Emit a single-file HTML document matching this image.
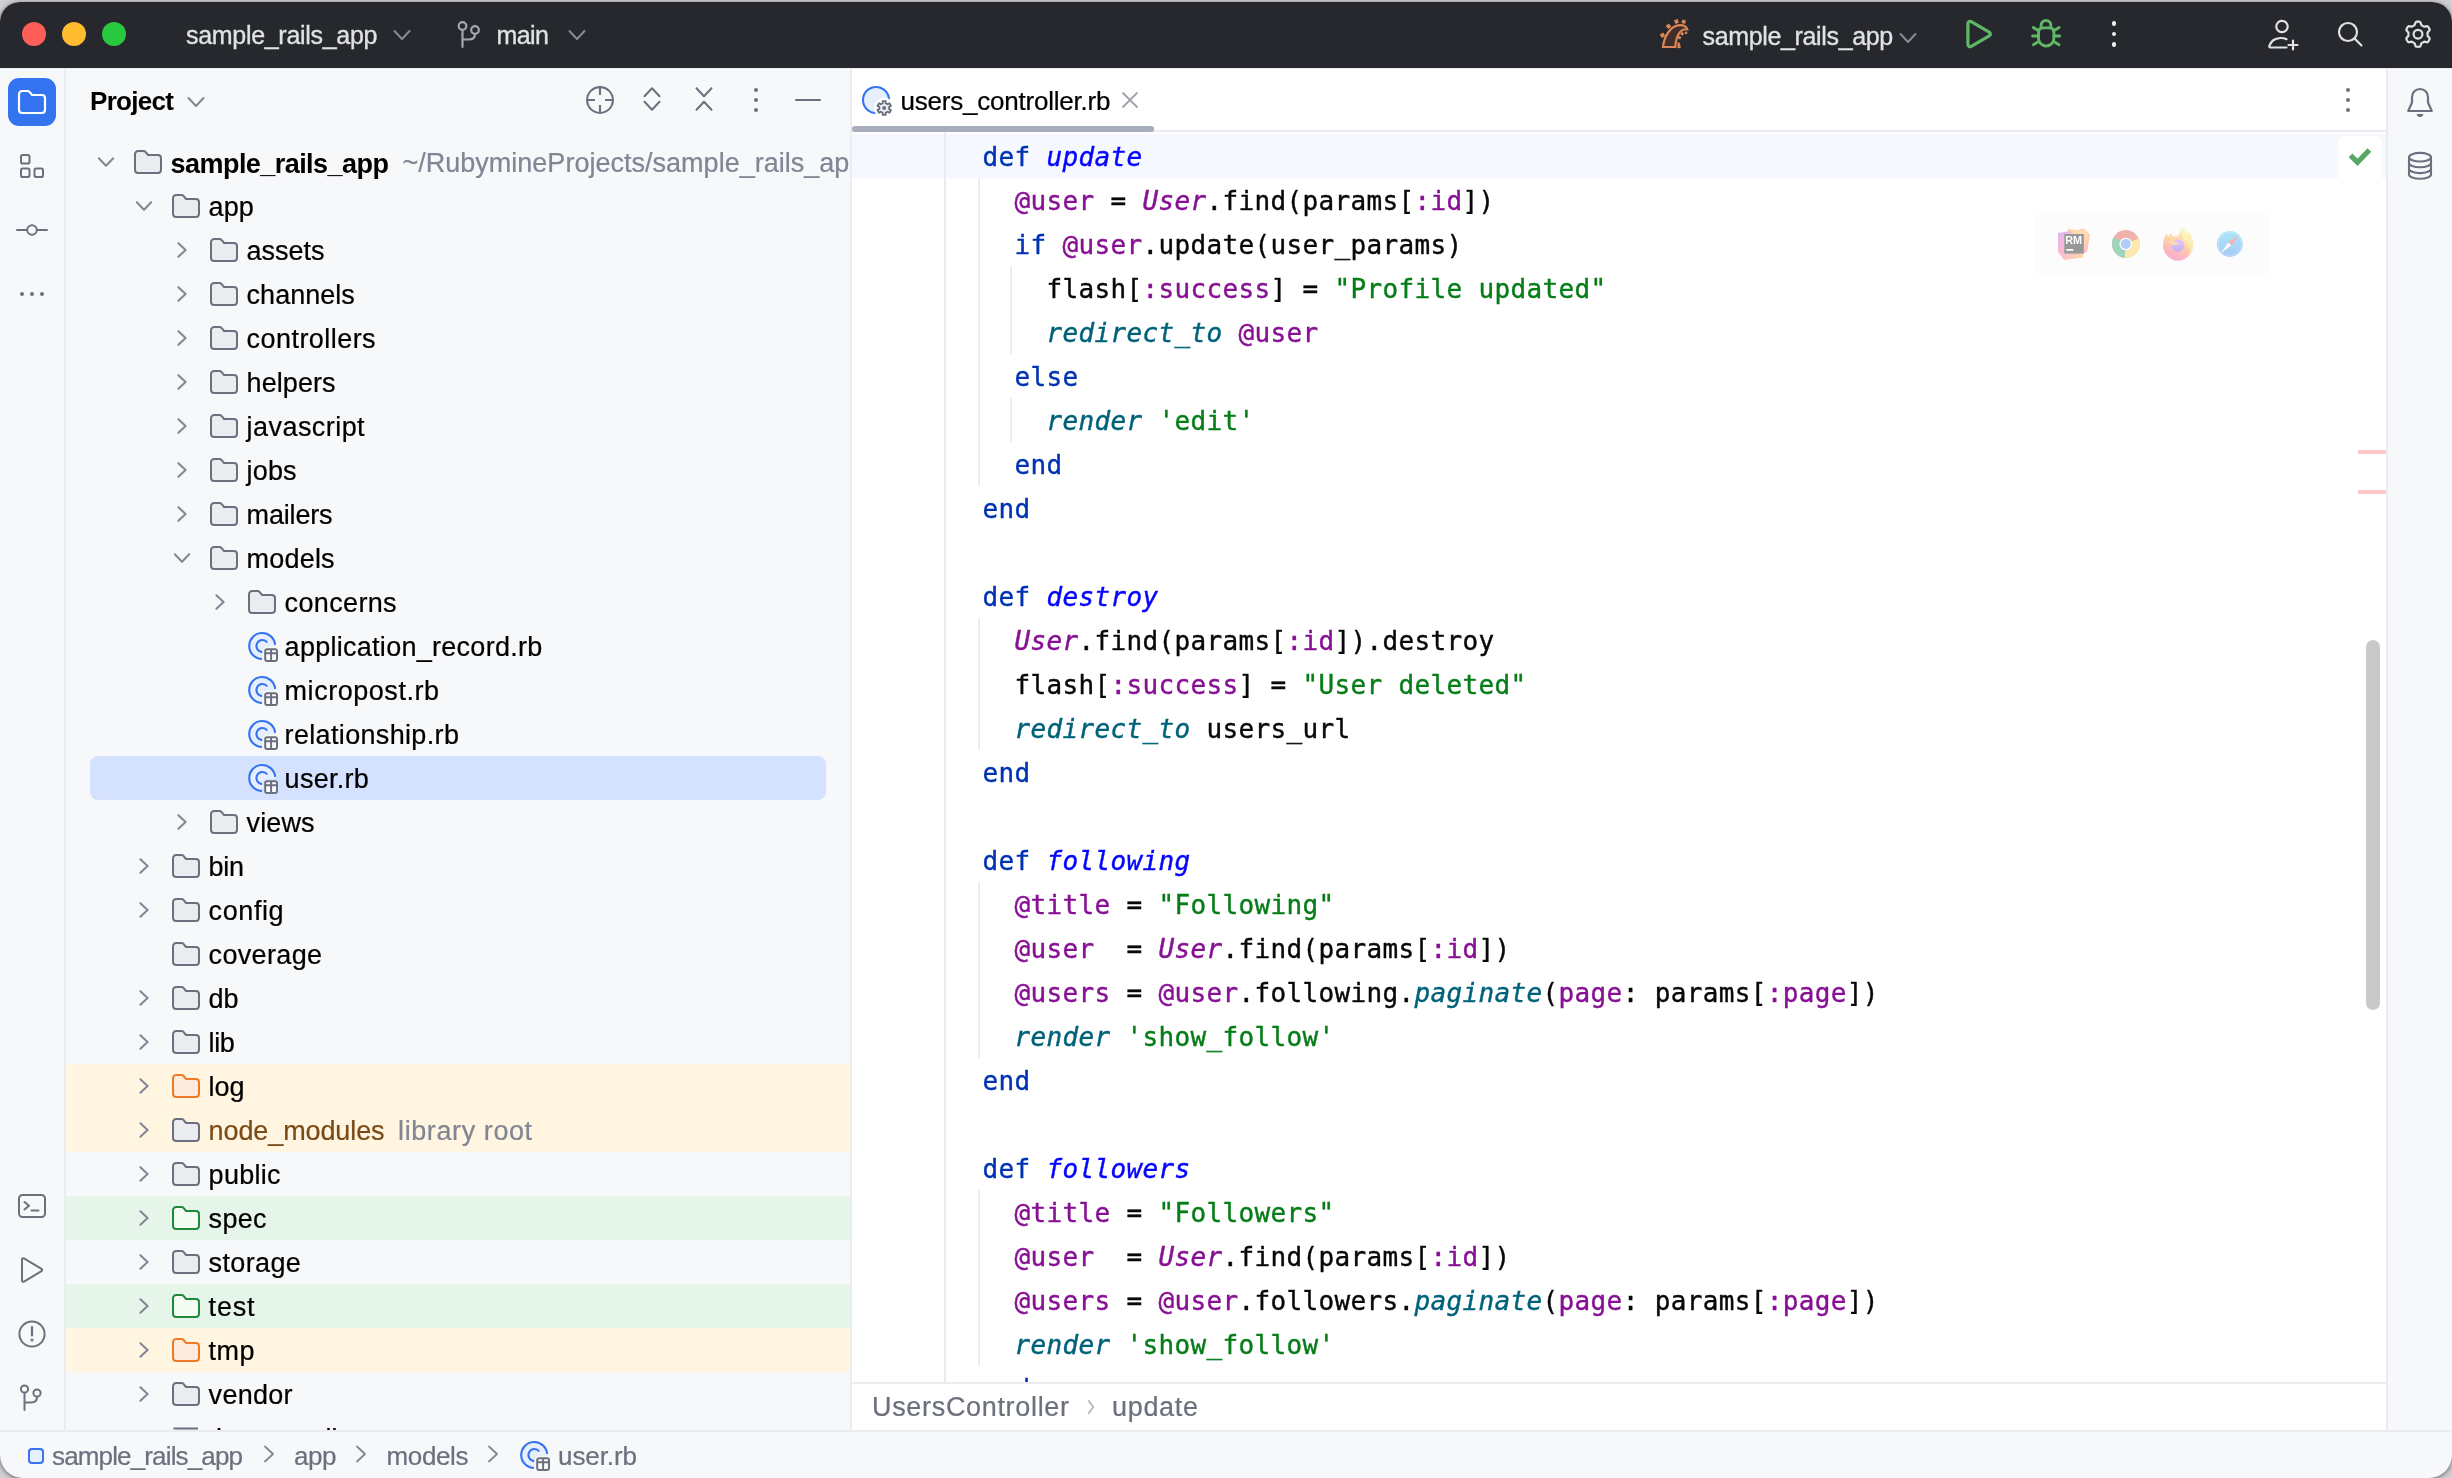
<!DOCTYPE html><html lang="en"><head><meta charset="utf-8"><title>sample_rails_app – users_controller.rb</title>
<style>

html,body{margin:0;padding:0;}
body{width:2452px;height:1478px;overflow:hidden;background:#D2CFD2;position:relative;font-family:"Liberation Sans", "DejaVu Sans", sans-serif;}
.a{position:absolute;display:block;}
.t{position:absolute;white-space:pre;font-family:"Liberation Sans", "DejaVu Sans", sans-serif;}
#win{will-change:transform;position:absolute;left:0;top:2px;width:2452px;height:1476px;border-radius:20px 20px 23px 23px;overflow:hidden;background:#F7F8FA;box-shadow:0 1px 5px rgba(0,0,0,.55);}
#title{position:absolute;left:0;top:0;width:2452px;height:65.5px;background:#27282E;}
.code{position:absolute;left:951px;white-space:pre;font-family:"DejaVu Sans Mono", "Liberation Mono", monospace;font-size:26px;letter-spacing:0.348px;line-height:44px;height:44px;color:#080808;-webkit-text-stroke:0.4px currentColor;}
.k{color:#0033B3} .m{color:#0505FF;font-style:italic} .v{color:#871094} .c{color:#871094;font-style:italic}
.s{color:#067D17} .f{color:#00627A;font-style:italic}
.row{position:absolute;left:67px;width:783px;height:44px;}

</style></head><body>
<div id="win">
<div id="title"></div>
<div class="a" style="left:22px;top:20px;width:24px;height:24px;border-radius:12px;background:#FF5F57"></div>
<div class="a" style="left:62px;top:20px;width:24px;height:24px;border-radius:12px;background:#FEBC2E"></div>
<div class="a" style="left:102px;top:20px;width:24px;height:24px;border-radius:12px;background:#28C840"></div>
<div class="t" style="left:186px;top:13.0px;font-size:25px;line-height:40px;color:#DFE1E5;letter-spacing:-0.304px;-webkit-text-stroke:0.35px #DFE1E5;">sample_rails_app</div>
<svg class="a" style="left:390px;top:20.5px" width="24" height="24" viewBox="0 0 24 24"><path d="M4.5 8.0L12 16.0L19.5 8.0" fill="none" stroke="#868A98" stroke-width="2" stroke-linecap="round" stroke-linejoin="round"/></svg>
<svg class="a" style="left:456px;top:17px" width="28" height="32" viewBox="0 0 28 32"><circle cx="6.5" cy="7" r="3.800" fill="none" stroke="#A4A7B0" stroke-width="2.2"/><circle cx="19" cy="11" r="3.800" fill="none" stroke="#A4A7B0" stroke-width="2.2"/><path d="M6.5 11V28M19 15c0 4-3 5.500-6 5.500H6.500" fill="none" stroke="#A4A7B0" stroke-width="2.2" stroke-linecap="round"/></svg>
<div class="t" style="left:496.5px;top:13.0px;font-size:25px;line-height:40px;color:#DFE1E5;letter-spacing:-0.562px;-webkit-text-stroke:0.35px #DFE1E5;">main</div>
<svg class="a" style="left:564.5px;top:20.5px" width="24" height="24" viewBox="0 0 24 24"><path d="M4.5 8.0L12 16.0L19.5 8.0" fill="none" stroke="#868A98" stroke-width="2" stroke-linecap="round" stroke-linejoin="round"/></svg>
<svg class="a" style="left:1656px;top:15px" width="36" height="34" viewBox="0 0 36 34"><path d="M7 30C8 19 15 8.200 24.200 8.200C28 8.200 30.500 9.800 31.200 12.300C26.500 11.800 22.800 15 21 20.500C19.800 24 19.300 27 19.300 30Z" fill="#432E27" stroke="#DB8656" stroke-width="2.200" stroke-linejoin="miter"/><g fill="#DB8656"><rect x="4.50" y="16.20" width="4" height="4" transform="rotate(-28 6.5 18.2)"/><rect x="10.50" y="7.30" width="4" height="4" transform="rotate(-40 12.5 9.3)"/><rect x="18.60" y="2.60" width="3.8" height="3.8" transform="rotate(-18 20.5 4.5)"/><rect x="25.90" y="2.90" width="3.6" height="3.6" transform="rotate(15 27.7 4.7)"/><rect x="28.80" y="14.60" width="2.4" height="2.4" transform="rotate(0 30 15.8)"/><rect x="24.80" y="15.40" width="2.8" height="2.8" transform="rotate(40 26.2 16.8)"/><rect x="22.05" y="19.15" width="2.9" height="2.9" transform="rotate(25 23.5 20.6)"/><path d="M21.600 24.800l2.300 1.200.9 5-3.400.3z"/></g></svg>
<div class="t" style="left:1702.5px;top:13.5px;font-size:25px;line-height:40px;color:#DFE1E5;letter-spacing:-0.350px;-webkit-text-stroke:0.35px #DFE1E5;">sample_rails_app</div>
<svg class="a" style="left:1896px;top:24px" width="24" height="24" viewBox="0 0 24 24"><path d="M4.5 8.0L12 16.0L19.5 8.0" fill="none" stroke="#868A98" stroke-width="2" stroke-linecap="round" stroke-linejoin="round"/></svg>
<svg class="a" style="left:1961px;top:14px" width="36" height="36" viewBox="0 0 36 36"><path d="M6.900 7.600v20.800c0 1.700 1.800 2.700 3.300 1.900l18-10.400c1.500-.9 1.500-3 0-3.800l-18-10.400c-1.500-.9-3.300.2-3.300 1.900z" fill="none" stroke="#5FB865" stroke-width="3.200" stroke-linejoin="round"/></svg>
<svg class="a" style="left:2028px;top:15px" width="36" height="34" viewBox="0 0 36 34"><g fill="none" stroke="#5FB865" stroke-width="2.900" stroke-linecap="round"><path d="M10.500 15.500c0-2.800 1.800-4.600 4.600-4.600h6.200c2.800 0 4.600 1.800 4.600 4.600V21.300a7.700 7.700 0 0 1-15.400 0z"/><path d="M13.150 10.900V8.300a4.850 4.850 0 0 1 9.700 0V10.900"/><path d="M4.600 19H10.500M25.900 19H31.600M5.300 10.600L10.700 13.800M31.100 10.600L25.700 13.800M10.700 24.600L5.400 27.800M25.700 24.600L31 27.800"/></g></svg>
<div class="a" style="left:2111.6px;top:18.900000000000002px;width:4.8px;height:4.8px;border-radius:3px;background:#F0F1F5"></div>
<div class="a" style="left:2111.6px;top:29.6px;width:4.8px;height:4.8px;border-radius:3px;background:#F0F1F5"></div>
<div class="a" style="left:2111.6px;top:40.4px;width:4.8px;height:4.8px;border-radius:3px;background:#F0F1F5"></div>
<svg class="a" style="left:2265px;top:15px" width="38" height="36" viewBox="0 0 38 36"><g fill="none" stroke="#DFE1E5" stroke-width="2.200" stroke-linecap="round"><circle cx="17" cy="9.500" r="5.700"/><path d="M21.500 30.500H5.500c-1 0-1.500-.8-1.200-1.700C6 24 10.500 21 16 21c2 0 4 .4 5.500 1.200"/><path d="M28 23.500v9M23.500 28h9"/></g></svg>
<svg class="a" style="left:2334px;top:16px" width="32" height="32" viewBox="0 0 32 32"><g fill="none" stroke="#DFE1E5" stroke-width="2.200" stroke-linecap="round"><circle cx="14" cy="14" r="9"/><path d="M20.800 20.800L27.500 27.500"/></g></svg>
<svg class="a" style="left:2400px;top:14px" width="36" height="36" viewBox="0 0 36 36"><path d="M18.00 5.60L19.10 5.65L20.16 5.94L20.87 7.48L21.33 9.04L22.06 9.50L22.80 9.89L23.51 10.34L24.27 10.73L25.85 10.35L27.54 10.20L28.32 10.97L28.91 11.90L29.42 12.88L29.70 13.94L28.72 15.33L27.60 16.51L27.56 17.36L27.60 18.20L27.56 19.04L27.60 19.89L28.72 21.07L29.70 22.46L29.42 23.52L28.91 24.50L28.32 25.43L27.54 26.20L25.85 26.05L24.27 25.67L23.51 26.06L22.80 26.51L22.06 26.90L21.33 27.36L20.87 28.92L20.16 30.46L19.10 30.75L18.00 30.80L16.90 30.75L15.84 30.46L15.13 28.92L14.67 27.36L13.94 26.90L13.20 26.51L12.49 26.06L11.73 25.67L10.15 26.05L8.46 26.20L7.68 25.43L7.09 24.50L6.58 23.52L6.30 22.46L7.28 21.07L8.40 19.89L8.44 19.04L8.40 18.20L8.44 17.36L8.40 16.51L7.28 15.33L6.30 13.94L6.58 12.88L7.09 11.90L7.68 10.97L8.46 10.20L10.15 10.35L11.73 10.73L12.49 10.34L13.20 9.89L13.94 9.50L14.67 9.04L15.13 7.48L15.84 5.94L16.90 5.65L18.00 5.60Z" fill="none" stroke="#DFE1E5" stroke-width="2.2" stroke-linejoin="round"/><circle cx="18" cy="18.2" r="4.4" fill="none" stroke="#DFE1E5" stroke-width="2.2"/></svg>
<div class="a" style="left:0;top:65.5px;width:2452px;height:1.5px;background:#EBECF0"></div>
<div class="a" style="left:64.3px;top:67px;width:1.9px;height:1361px;background:#EBECF0"></div>
<div class="a" style="left:850px;top:67px;width:2px;height:1361px;background:#EBECF0"></div>
<div class="a" style="left:2386px;top:67px;width:2px;height:1361px;background:#EBECF0"></div>
<div class="a" style="left:0;top:1428px;width:2452px;height:2px;background:#EBECF0"></div>
<div class="a" style="left:8px;top:76px;width:48px;height:48px;border-radius:11px;background:#3574F0"></div>
<svg class="a" style="left:16px;top:84px" width="32" height="32" viewBox="0 0 32 32"><path d="M3 8.200C3 6.400 4.400 5 6.200 5h5.200c.9 0 1.700.4 2.300 1.100L16.100 9h9.700c1.800 0 3.200 1.400 3.200 3.200v11.600c0 1.800-1.400 3.200-3.200 3.200H6.200C4.400 27 3 25.600 3 23.800z" fill="none" stroke="#fff" stroke-width="2.200" stroke-linejoin="round"/></svg>
<svg class="a" style="left:16px;top:148px" width="32" height="32" viewBox="0 0 32 32"><g fill="none" stroke="#6C707E" stroke-width="2"><rect x="5" y="5" width="8.500" height="8.500" rx="1.800"/><rect x="5" y="18.500" width="8.500" height="8.500" rx="1.800"/><rect x="18.500" y="18.500" width="8.500" height="8.500" rx="1.800"/></g></svg>
<svg class="a" style="left:14px;top:212px" width="36" height="32" viewBox="0 0 36 32"><g fill="none" stroke="#6C707E" stroke-width="2" stroke-linecap="round"><circle cx="18" cy="16" r="4.800"/><path d="M3 16h10M23 16h10"/></g></svg>
<div class="a" style="left:19.8px;top:289.8px;width:4.4px;height:4.4px;border-radius:3px;background:#6C707E"></div>
<div class="a" style="left:29.8px;top:289.8px;width:4.4px;height:4.4px;border-radius:3px;background:#6C707E"></div>
<div class="a" style="left:39.8px;top:289.8px;width:4.4px;height:4.4px;border-radius:3px;background:#6C707E"></div>
<svg class="a" style="left:16px;top:1188px" width="32" height="32" viewBox="0 0 32 32"><g fill="none" stroke="#6C707E" stroke-width="2" stroke-linecap="round" stroke-linejoin="round"><rect x="3" y="5" width="26" height="22" rx="3.500"/><path d="M8.500 12l4.500 3.800-4.500 3.700M15.500 20.500h7"/></g></svg>
<svg class="a" style="left:16px;top:1252px" width="32" height="32" viewBox="0 0 32 32"><path d="M6 5.500v21c0 1 1.100 1.600 2 1.100l17.500-10.500c.8-.5.8-1.700 0-2.200L8 4.400C7.100 3.900 6 4.500 6 5.500z" fill="none" stroke="#6C707E" stroke-width="2" stroke-linejoin="round"/></svg>
<svg class="a" style="left:16px;top:1316px" width="32" height="32" viewBox="0 0 32 32"><circle cx="16" cy="16" r="12.600" fill="none" stroke="#6C707E" stroke-width="2"/><path d="M16 9v8.500" stroke="#6C707E" stroke-width="2.200" stroke-linecap="round"/><circle cx="16" cy="22" r="1.500" fill="#6C707E"/></svg>
<svg class="a" style="left:18px;top:1380px" width="28" height="32" viewBox="0 0 28 32"><g fill="none" stroke="#6C707E" stroke-width="2" stroke-linecap="round"><circle cx="6.500" cy="7" r="3.600"/><circle cx="19" cy="11" r="3.600"/><path d="M6.500 11V28M19 15c0 4-3 5.500-6 5.500H6.500"/></g></svg>
<div class="t" style="left:90px;top:79.0px;font-size:26px;line-height:40px;color:#000;font-weight:700;letter-spacing:-0.693px;">Project</div>
<svg class="a" style="left:184px;top:88px" width="24" height="24" viewBox="0 0 24 24"><path d="M4.5 8.0L12 16.0L19.5 8.0" fill="none" stroke="#818594" stroke-width="2" stroke-linecap="round" stroke-linejoin="round"/></svg>
<svg class="a" style="left:584px;top:82px" width="32" height="32" viewBox="0 0 32 32"><g fill="none" stroke="#6C707E" stroke-width="2.1"><circle cx="16" cy="16" r="12.900"/><path d="M16 3.500v7.500M16 21v7.500M3.500 16h7.500M21 16h7.500"/></g></svg>
<svg class="a" style="left:636px;top:82px" width="32" height="32" viewBox="0 0 32 32"><g fill="none" stroke="#6C707E" stroke-width="2" stroke-linecap="round" stroke-linejoin="round"><path d="M8.500 12.300l7.500-8 7.500 8M8.500 17.700l7.500 8 7.500-8"/></g></svg>
<svg class="a" style="left:688px;top:82px" width="32" height="32" viewBox="0 0 32 32"><g fill="none" stroke="#6C707E" stroke-width="2" stroke-linecap="round" stroke-linejoin="round"><path d="M8.500 4.300l7.500 8 7.500-8M8.500 25.700l7.500-8 7.500 8"/></g></svg>
<div class="a" style="left:753.8px;top:85.8px;width:4.4px;height:4.4px;border-radius:3px;background:#6C707E"></div>
<div class="a" style="left:753.8px;top:95.8px;width:4.4px;height:4.4px;border-radius:3px;background:#6C707E"></div>
<div class="a" style="left:753.8px;top:105.8px;width:4.4px;height:4.4px;border-radius:3px;background:#6C707E"></div>
<div class="a" style="left:795px;top:96.9px;width:26px;height:2.2px;border-radius:1px;background:#6C707E"></div>
<div class="a" id="tree" style="left:66px;top:132px;width:784px;height:1296px;overflow:hidden">
<svg class="a" style="left:28px;top:15.5px" width="24" height="24" viewBox="0 0 24 24"><path d="M4.8 8.2L12 15.8L19.2 8.2" fill="none" stroke="#818594" stroke-width="2" stroke-linecap="round" stroke-linejoin="round"/></svg>
<svg class="a" style="left:66px;top:12px" width="32" height="32" viewBox="0 0 32 32"><path d="M3 8.2C3 6.4 4.4 5 6.2 5h5.2c.9 0 1.7.4 2.3 1.1L16.1 9h9.7c1.8 0 3.2 1.4 3.2 3.2v11.500c0 1.8-1.4 3.2-3.2 3.2H6.2C4.4 26.900 3 25.500 3 23.700z" fill="#EBECF0" stroke="#6C707E" stroke-width="2" stroke-linejoin="round"/></svg>
<div class="t" style="left:104.6px;top:9.5px;font-size:27px;line-height:40px;color:#000;font-weight:700;letter-spacing:-0.556px;">sample_rails_app</div>
<div class="t" style="left:336.4px;top:8.5px;font-size:27px;line-height:40px;color:#818594;-webkit-text-stroke:0.22px currentColor;letter-spacing:0.016px;">~/RubymineProjects/sample_rails_ap</div>
<svg class="a" style="left:66px;top:59.5px" width="24" height="24" viewBox="0 0 24 24"><path d="M4.8 8.2L12 15.8L19.2 8.2" fill="none" stroke="#818594" stroke-width="2" stroke-linecap="round" stroke-linejoin="round"/></svg>
<svg class="a" style="left:104px;top:56px" width="32" height="32" viewBox="0 0 32 32"><path d="M3 8.2C3 6.4 4.4 5 6.2 5h5.2c.9 0 1.7.4 2.3 1.1L16.1 9h9.7c1.8 0 3.2 1.4 3.2 3.2v11.500c0 1.8-1.4 3.2-3.2 3.2H6.2C4.4 26.900 3 25.500 3 23.700z" fill="#EBECF0" stroke="#6C707E" stroke-width="2" stroke-linejoin="round"/></svg>
<div class="t" style="left:142.6px;top:52.5px;font-size:27px;line-height:40px;color:#000;-webkit-text-stroke:0.22px currentColor;letter-spacing:0.119px;">app</div>
<svg class="a" style="left:103.9px;top:103.69999999999999px" width="24" height="24" viewBox="0 0 24 24"><path d="M8.4 5.2L15.6 12L8.4 18.8" fill="none" stroke="#818594" stroke-width="2" stroke-linecap="round" stroke-linejoin="round"/></svg>
<svg class="a" style="left:142px;top:100px" width="32" height="32" viewBox="0 0 32 32"><path d="M3 8.2C3 6.4 4.4 5 6.2 5h5.2c.9 0 1.7.4 2.3 1.1L16.1 9h9.7c1.8 0 3.2 1.4 3.2 3.2v11.500c0 1.8-1.4 3.2-3.2 3.2H6.2C4.4 26.900 3 25.500 3 23.700z" fill="#EBECF0" stroke="#6C707E" stroke-width="2" stroke-linejoin="round"/></svg>
<div class="t" style="left:180.6px;top:96.5px;font-size:27px;line-height:40px;color:#000;-webkit-text-stroke:0.22px currentColor;letter-spacing:-0.009px;">assets</div>
<svg class="a" style="left:103.9px;top:147.7px" width="24" height="24" viewBox="0 0 24 24"><path d="M8.4 5.2L15.6 12L8.4 18.8" fill="none" stroke="#818594" stroke-width="2" stroke-linecap="round" stroke-linejoin="round"/></svg>
<svg class="a" style="left:142px;top:144px" width="32" height="32" viewBox="0 0 32 32"><path d="M3 8.2C3 6.4 4.4 5 6.2 5h5.2c.9 0 1.7.4 2.3 1.1L16.1 9h9.7c1.8 0 3.2 1.4 3.2 3.2v11.500c0 1.8-1.4 3.2-3.2 3.2H6.2C4.4 26.900 3 25.500 3 23.700z" fill="#EBECF0" stroke="#6C707E" stroke-width="2" stroke-linejoin="round"/></svg>
<div class="t" style="left:180.6px;top:140.5px;font-size:27px;line-height:40px;color:#000;-webkit-text-stroke:0.22px currentColor;letter-spacing:0.015px;">channels</div>
<svg class="a" style="left:103.9px;top:191.7px" width="24" height="24" viewBox="0 0 24 24"><path d="M8.4 5.2L15.6 12L8.4 18.8" fill="none" stroke="#818594" stroke-width="2" stroke-linecap="round" stroke-linejoin="round"/></svg>
<svg class="a" style="left:142px;top:188px" width="32" height="32" viewBox="0 0 32 32"><path d="M3 8.2C3 6.4 4.4 5 6.2 5h5.2c.9 0 1.7.4 2.3 1.1L16.1 9h9.7c1.8 0 3.2 1.4 3.2 3.2v11.500c0 1.8-1.4 3.2-3.2 3.2H6.2C4.4 26.900 3 25.500 3 23.700z" fill="#EBECF0" stroke="#6C707E" stroke-width="2" stroke-linejoin="round"/></svg>
<div class="t" style="left:180.6px;top:184.5px;font-size:27px;line-height:40px;color:#000;-webkit-text-stroke:0.22px currentColor;letter-spacing:0.445px;">controllers</div>
<svg class="a" style="left:103.9px;top:235.7px" width="24" height="24" viewBox="0 0 24 24"><path d="M8.4 5.2L15.6 12L8.4 18.8" fill="none" stroke="#818594" stroke-width="2" stroke-linecap="round" stroke-linejoin="round"/></svg>
<svg class="a" style="left:142px;top:232px" width="32" height="32" viewBox="0 0 32 32"><path d="M3 8.2C3 6.4 4.4 5 6.2 5h5.2c.9 0 1.7.4 2.3 1.1L16.1 9h9.7c1.8 0 3.2 1.4 3.2 3.2v11.500c0 1.8-1.4 3.2-3.2 3.2H6.2C4.4 26.900 3 25.500 3 23.700z" fill="#EBECF0" stroke="#6C707E" stroke-width="2" stroke-linejoin="round"/></svg>
<div class="t" style="left:180.6px;top:228.5px;font-size:27px;line-height:40px;color:#000;-webkit-text-stroke:0.22px currentColor;letter-spacing:0.073px;">helpers</div>
<svg class="a" style="left:103.9px;top:279.7px" width="24" height="24" viewBox="0 0 24 24"><path d="M8.4 5.2L15.6 12L8.4 18.8" fill="none" stroke="#818594" stroke-width="2" stroke-linecap="round" stroke-linejoin="round"/></svg>
<svg class="a" style="left:142px;top:276px" width="32" height="32" viewBox="0 0 32 32"><path d="M3 8.2C3 6.4 4.4 5 6.2 5h5.2c.9 0 1.7.4 2.3 1.1L16.1 9h9.7c1.8 0 3.2 1.4 3.2 3.2v11.500c0 1.8-1.4 3.2-3.2 3.2H6.2C4.4 26.900 3 25.500 3 23.700z" fill="#EBECF0" stroke="#6C707E" stroke-width="2" stroke-linejoin="round"/></svg>
<div class="t" style="left:180.6px;top:272.5px;font-size:27px;line-height:40px;color:#000;-webkit-text-stroke:0.22px currentColor;letter-spacing:0.439px;">javascript</div>
<svg class="a" style="left:103.9px;top:323.7px" width="24" height="24" viewBox="0 0 24 24"><path d="M8.4 5.2L15.6 12L8.4 18.8" fill="none" stroke="#818594" stroke-width="2" stroke-linecap="round" stroke-linejoin="round"/></svg>
<svg class="a" style="left:142px;top:320px" width="32" height="32" viewBox="0 0 32 32"><path d="M3 8.2C3 6.4 4.4 5 6.2 5h5.2c.9 0 1.7.4 2.3 1.1L16.1 9h9.7c1.8 0 3.2 1.4 3.2 3.2v11.500c0 1.8-1.4 3.2-3.2 3.2H6.2C4.4 26.900 3 25.500 3 23.700z" fill="#EBECF0" stroke="#6C707E" stroke-width="2" stroke-linejoin="round"/></svg>
<div class="t" style="left:180.6px;top:316.5px;font-size:27px;line-height:40px;color:#000;-webkit-text-stroke:0.22px currentColor;letter-spacing:0.156px;">jobs</div>
<svg class="a" style="left:103.9px;top:367.70000000000005px" width="24" height="24" viewBox="0 0 24 24"><path d="M8.4 5.2L15.6 12L8.4 18.8" fill="none" stroke="#818594" stroke-width="2" stroke-linecap="round" stroke-linejoin="round"/></svg>
<svg class="a" style="left:142px;top:364px" width="32" height="32" viewBox="0 0 32 32"><path d="M3 8.2C3 6.4 4.4 5 6.2 5h5.2c.9 0 1.7.4 2.3 1.1L16.1 9h9.7c1.8 0 3.2 1.4 3.2 3.2v11.500c0 1.8-1.4 3.2-3.2 3.2H6.2C4.4 26.900 3 25.500 3 23.700z" fill="#EBECF0" stroke="#6C707E" stroke-width="2" stroke-linejoin="round"/></svg>
<div class="t" style="left:180.6px;top:360.5px;font-size:27px;line-height:40px;color:#000;-webkit-text-stroke:0.22px currentColor;letter-spacing:-0.169px;">mailers</div>
<svg class="a" style="left:104px;top:411.5px" width="24" height="24" viewBox="0 0 24 24"><path d="M4.8 8.2L12 15.8L19.2 8.2" fill="none" stroke="#818594" stroke-width="2" stroke-linecap="round" stroke-linejoin="round"/></svg>
<svg class="a" style="left:142px;top:408px" width="32" height="32" viewBox="0 0 32 32"><path d="M3 8.2C3 6.4 4.4 5 6.2 5h5.2c.9 0 1.7.4 2.3 1.1L16.1 9h9.7c1.8 0 3.2 1.4 3.2 3.2v11.500c0 1.8-1.4 3.2-3.2 3.2H6.2C4.4 26.900 3 25.500 3 23.700z" fill="#EBECF0" stroke="#6C707E" stroke-width="2" stroke-linejoin="round"/></svg>
<div class="t" style="left:180.6px;top:404.5px;font-size:27px;line-height:40px;color:#000;-webkit-text-stroke:0.22px currentColor;letter-spacing:0.191px;">models</div>
<svg class="a" style="left:141.9px;top:455.70000000000005px" width="24" height="24" viewBox="0 0 24 24"><path d="M8.4 5.2L15.6 12L8.4 18.8" fill="none" stroke="#818594" stroke-width="2" stroke-linecap="round" stroke-linejoin="round"/></svg>
<svg class="a" style="left:180px;top:452px" width="32" height="32" viewBox="0 0 32 32"><path d="M3 8.2C3 6.4 4.4 5 6.2 5h5.2c.9 0 1.7.4 2.3 1.1L16.1 9h9.7c1.8 0 3.2 1.4 3.2 3.2v11.500c0 1.8-1.4 3.2-3.2 3.2H6.2C4.4 26.900 3 25.500 3 23.700z" fill="#EBECF0" stroke="#6C707E" stroke-width="2" stroke-linejoin="round"/></svg>
<div class="t" style="left:218.60000000000002px;top:448.5px;font-size:27px;line-height:40px;color:#000;-webkit-text-stroke:0.22px currentColor;letter-spacing:0.348px;">concerns</div>
<svg class="a" style="left:182px;top:496px" width="34" height="34" viewBox="0 0 34 34"><circle cx="14.2" cy="16" r="13" fill="#E7EFFD"/><path d="M27.150 14.800A13 13 0 1 0 14.200 29" fill="none" stroke="#3574F0" stroke-width="2.1"/><path d="M19.300 12.500A6 6 0 1 0 14.200 22" fill="none" stroke="#3574F0" stroke-width="2"/><rect x="14.200" y="26" width="4" height="6" fill="#F7F8FA"/><rect x="15.200" y="17" width="17" height="17" rx="3" fill="#F7F8FA"/><rect x="17.200" y="19.200" width="11.800" height="11.800" rx="2" fill="#FDFDFE" stroke="#6C707E" stroke-width="2"/><path d="M17.200 23.300H29M23.100 19.200V31" stroke="#6C707E" stroke-width="2"/></svg>
<div class="t" style="left:218.60000000000002px;top:492.5px;font-size:27px;line-height:40px;color:#000;-webkit-text-stroke:0.22px currentColor;letter-spacing:0.277px;">application_record.rb</div>
<svg class="a" style="left:182px;top:540px" width="34" height="34" viewBox="0 0 34 34"><circle cx="14.2" cy="16" r="13" fill="#E7EFFD"/><path d="M27.150 14.800A13 13 0 1 0 14.200 29" fill="none" stroke="#3574F0" stroke-width="2.1"/><path d="M19.300 12.500A6 6 0 1 0 14.200 22" fill="none" stroke="#3574F0" stroke-width="2"/><rect x="14.200" y="26" width="4" height="6" fill="#F7F8FA"/><rect x="15.200" y="17" width="17" height="17" rx="3" fill="#F7F8FA"/><rect x="17.200" y="19.200" width="11.800" height="11.800" rx="2" fill="#FDFDFE" stroke="#6C707E" stroke-width="2"/><path d="M17.200 23.300H29M23.100 19.200V31" stroke="#6C707E" stroke-width="2"/></svg>
<div class="t" style="left:218.60000000000002px;top:536.5px;font-size:27px;line-height:40px;color:#000;-webkit-text-stroke:0.22px currentColor;letter-spacing:0.532px;">micropost.rb</div>
<svg class="a" style="left:182px;top:584px" width="34" height="34" viewBox="0 0 34 34"><circle cx="14.2" cy="16" r="13" fill="#E7EFFD"/><path d="M27.150 14.800A13 13 0 1 0 14.200 29" fill="none" stroke="#3574F0" stroke-width="2.1"/><path d="M19.300 12.500A6 6 0 1 0 14.200 22" fill="none" stroke="#3574F0" stroke-width="2"/><rect x="14.200" y="26" width="4" height="6" fill="#F7F8FA"/><rect x="15.200" y="17" width="17" height="17" rx="3" fill="#F7F8FA"/><rect x="17.200" y="19.200" width="11.800" height="11.800" rx="2" fill="#FDFDFE" stroke="#6C707E" stroke-width="2"/><path d="M17.200 23.300H29M23.100 19.200V31" stroke="#6C707E" stroke-width="2"/></svg>
<div class="t" style="left:218.60000000000002px;top:580.5px;font-size:27px;line-height:40px;color:#000;-webkit-text-stroke:0.22px currentColor;letter-spacing:0.336px;">relationship.rb</div>
<div class="a" style="left:24px;top:622px;width:736px;height:44px;border-radius:8px;background:#D4E2FF"></div>
<svg class="a" style="left:182px;top:628px" width="34" height="34" viewBox="0 0 34 34"><circle cx="14.2" cy="16" r="13" fill="#E7EFFD"/><path d="M27.150 14.800A13 13 0 1 0 14.200 29" fill="none" stroke="#3574F0" stroke-width="2.1"/><path d="M19.300 12.500A6 6 0 1 0 14.200 22" fill="none" stroke="#3574F0" stroke-width="2"/><rect x="14.200" y="26" width="4" height="6" fill="#D4E2FF"/><rect x="15.200" y="17" width="17" height="17" rx="3" fill="#D4E2FF"/><rect x="17.200" y="19.200" width="11.800" height="11.800" rx="2" fill="#FDFDFE" stroke="#6C707E" stroke-width="2"/><path d="M17.200 23.300H29M23.100 19.200V31" stroke="#6C707E" stroke-width="2"/></svg>
<div class="t" style="left:218.60000000000002px;top:624.5px;font-size:27px;line-height:40px;color:#000;-webkit-text-stroke:0.22px currentColor;letter-spacing:0.276px;">user.rb</div>
<svg class="a" style="left:103.9px;top:675.7px" width="24" height="24" viewBox="0 0 24 24"><path d="M8.4 5.2L15.6 12L8.4 18.8" fill="none" stroke="#818594" stroke-width="2" stroke-linecap="round" stroke-linejoin="round"/></svg>
<svg class="a" style="left:142px;top:672px" width="32" height="32" viewBox="0 0 32 32"><path d="M3 8.2C3 6.4 4.4 5 6.2 5h5.2c.9 0 1.7.4 2.3 1.1L16.1 9h9.7c1.8 0 3.2 1.4 3.2 3.2v11.500c0 1.8-1.4 3.2-3.2 3.2H6.2C4.4 26.900 3 25.500 3 23.700z" fill="#EBECF0" stroke="#6C707E" stroke-width="2" stroke-linejoin="round"/></svg>
<div class="t" style="left:180.6px;top:668.5px;font-size:27px;line-height:40px;color:#000;-webkit-text-stroke:0.22px currentColor;letter-spacing:0.121px;">views</div>
<svg class="a" style="left:65.9px;top:719.7px" width="24" height="24" viewBox="0 0 24 24"><path d="M8.4 5.2L15.6 12L8.4 18.8" fill="none" stroke="#818594" stroke-width="2" stroke-linecap="round" stroke-linejoin="round"/></svg>
<svg class="a" style="left:104px;top:716px" width="32" height="32" viewBox="0 0 32 32"><path d="M3 8.2C3 6.4 4.4 5 6.2 5h5.2c.9 0 1.7.4 2.3 1.1L16.1 9h9.7c1.8 0 3.2 1.4 3.2 3.2v11.500c0 1.8-1.4 3.2-3.2 3.2H6.2C4.4 26.900 3 25.500 3 23.700z" fill="#EBECF0" stroke="#6C707E" stroke-width="2" stroke-linejoin="round"/></svg>
<div class="t" style="left:142.6px;top:712.5px;font-size:27px;line-height:40px;color:#000;-webkit-text-stroke:0.22px currentColor;letter-spacing:-0.316px;">bin</div>
<svg class="a" style="left:65.9px;top:763.7px" width="24" height="24" viewBox="0 0 24 24"><path d="M8.4 5.2L15.6 12L8.4 18.8" fill="none" stroke="#818594" stroke-width="2" stroke-linecap="round" stroke-linejoin="round"/></svg>
<svg class="a" style="left:104px;top:760px" width="32" height="32" viewBox="0 0 32 32"><path d="M3 8.2C3 6.4 4.4 5 6.2 5h5.2c.9 0 1.7.4 2.3 1.1L16.1 9h9.7c1.8 0 3.2 1.4 3.2 3.2v11.500c0 1.8-1.4 3.2-3.2 3.2H6.2C4.4 26.900 3 25.500 3 23.700z" fill="#EBECF0" stroke="#6C707E" stroke-width="2" stroke-linejoin="round"/></svg>
<div class="t" style="left:142.6px;top:756.5px;font-size:27px;line-height:40px;color:#000;-webkit-text-stroke:0.22px currentColor;letter-spacing:0.588px;">config</div>
<svg class="a" style="left:104px;top:804px" width="32" height="32" viewBox="0 0 32 32"><path d="M3 8.2C3 6.4 4.4 5 6.2 5h5.2c.9 0 1.7.4 2.3 1.1L16.1 9h9.7c1.8 0 3.2 1.4 3.2 3.2v11.500c0 1.8-1.4 3.2-3.2 3.2H6.2C4.4 26.900 3 25.500 3 23.700z" fill="#EBECF0" stroke="#6C707E" stroke-width="2" stroke-linejoin="round"/></svg>
<div class="t" style="left:142.6px;top:800.5px;font-size:27px;line-height:40px;color:#000;-webkit-text-stroke:0.22px currentColor;letter-spacing:0.332px;">coverage</div>
<svg class="a" style="left:65.9px;top:851.7px" width="24" height="24" viewBox="0 0 24 24"><path d="M8.4 5.2L15.6 12L8.4 18.8" fill="none" stroke="#818594" stroke-width="2" stroke-linecap="round" stroke-linejoin="round"/></svg>
<svg class="a" style="left:104px;top:848px" width="32" height="32" viewBox="0 0 32 32"><path d="M3 8.2C3 6.4 4.4 5 6.2 5h5.2c.9 0 1.7.4 2.3 1.1L16.1 9h9.7c1.8 0 3.2 1.4 3.2 3.2v11.500c0 1.8-1.4 3.2-3.2 3.2H6.2C4.4 26.900 3 25.500 3 23.700z" fill="#EBECF0" stroke="#6C707E" stroke-width="2" stroke-linejoin="round"/></svg>
<div class="t" style="left:142.6px;top:844.5px;font-size:27px;line-height:40px;color:#000;-webkit-text-stroke:0.22px currentColor;letter-spacing:-0.047px;">db</div>
<svg class="a" style="left:65.9px;top:895.7px" width="24" height="24" viewBox="0 0 24 24"><path d="M8.4 5.2L15.6 12L8.4 18.8" fill="none" stroke="#818594" stroke-width="2" stroke-linecap="round" stroke-linejoin="round"/></svg>
<svg class="a" style="left:104px;top:892px" width="32" height="32" viewBox="0 0 32 32"><path d="M3 8.2C3 6.4 4.4 5 6.2 5h5.2c.9 0 1.7.4 2.3 1.1L16.1 9h9.7c1.8 0 3.2 1.4 3.2 3.2v11.500c0 1.8-1.4 3.2-3.2 3.2H6.2C4.4 26.900 3 25.500 3 23.700z" fill="#EBECF0" stroke="#6C707E" stroke-width="2" stroke-linejoin="round"/></svg>
<div class="t" style="left:142.6px;top:888.5px;font-size:27px;line-height:40px;color:#000;-webkit-text-stroke:0.22px currentColor;letter-spacing:-0.358px;">lib</div>
<div class="a" style="left:0;top:930px;width:784px;height:44px;background:#FFF5E0"></div>
<svg class="a" style="left:65.9px;top:939.7px" width="24" height="24" viewBox="0 0 24 24"><path d="M8.4 5.2L15.6 12L8.4 18.8" fill="none" stroke="#818594" stroke-width="2" stroke-linecap="round" stroke-linejoin="round"/></svg>
<svg class="a" style="left:104px;top:936px" width="32" height="32" viewBox="0 0 32 32"><path d="M3 8.2C3 6.4 4.4 5 6.2 5h5.2c.9 0 1.7.4 2.3 1.1L16.1 9h9.7c1.8 0 3.2 1.4 3.2 3.2v11.500c0 1.8-1.4 3.2-3.2 3.2H6.2C4.4 26.900 3 25.500 3 23.700z" fill="#FDEBDD" stroke="#EC7A26" stroke-width="2" stroke-linejoin="round"/></svg>
<div class="t" style="left:142.6px;top:932.5px;font-size:27px;line-height:40px;color:#000;-webkit-text-stroke:0.22px currentColor;letter-spacing:-0.016px;">log</div>
<div class="a" style="left:0;top:974px;width:784px;height:44px;background:#FFF5E0"></div>
<svg class="a" style="left:65.9px;top:983.7px" width="24" height="24" viewBox="0 0 24 24"><path d="M8.4 5.2L15.6 12L8.4 18.8" fill="none" stroke="#818594" stroke-width="2" stroke-linecap="round" stroke-linejoin="round"/></svg>
<svg class="a" style="left:104px;top:980px" width="32" height="32" viewBox="0 0 32 32"><path d="M3 8.2C3 6.4 4.4 5 6.2 5h5.2c.9 0 1.7.4 2.3 1.1L16.1 9h9.7c1.8 0 3.2 1.4 3.2 3.2v11.500c0 1.8-1.4 3.2-3.2 3.2H6.2C4.4 26.900 3 25.500 3 23.700z" fill="#EBECF0" stroke="#6C707E" stroke-width="2" stroke-linejoin="round"/></svg>
<div class="t" style="left:142.6px;top:976.5px;font-size:27px;line-height:40px;color:#7A4B17;-webkit-text-stroke:0.22px currentColor;letter-spacing:-0.104px;">node_modules</div>
<div class="t" style="left:332.1px;top:976.5px;font-size:27px;line-height:40px;color:#818594;-webkit-text-stroke:0.22px currentColor;letter-spacing:0.587px;">library root</div>
<svg class="a" style="left:65.9px;top:1027.7px" width="24" height="24" viewBox="0 0 24 24"><path d="M8.4 5.2L15.6 12L8.4 18.8" fill="none" stroke="#818594" stroke-width="2" stroke-linecap="round" stroke-linejoin="round"/></svg>
<svg class="a" style="left:104px;top:1024px" width="32" height="32" viewBox="0 0 32 32"><path d="M3 8.2C3 6.4 4.4 5 6.2 5h5.2c.9 0 1.7.4 2.3 1.1L16.1 9h9.7c1.8 0 3.2 1.4 3.2 3.2v11.500c0 1.8-1.4 3.2-3.2 3.2H6.2C4.4 26.900 3 25.500 3 23.700z" fill="#EBECF0" stroke="#6C707E" stroke-width="2" stroke-linejoin="round"/></svg>
<div class="t" style="left:142.6px;top:1020.5px;font-size:27px;line-height:40px;color:#000;-webkit-text-stroke:0.22px currentColor;letter-spacing:0.291px;">public</div>
<div class="a" style="left:0;top:1062px;width:784px;height:44px;background:#E6F5E9"></div>
<svg class="a" style="left:65.9px;top:1071.7px" width="24" height="24" viewBox="0 0 24 24"><path d="M8.4 5.2L15.6 12L8.4 18.8" fill="none" stroke="#818594" stroke-width="2" stroke-linecap="round" stroke-linejoin="round"/></svg>
<svg class="a" style="left:104px;top:1068px" width="32" height="32" viewBox="0 0 32 32"><path d="M3 8.2C3 6.4 4.4 5 6.2 5h5.2c.9 0 1.7.4 2.3 1.1L16.1 9h9.7c1.8 0 3.2 1.4 3.2 3.2v11.500c0 1.8-1.4 3.2-3.2 3.2H6.2C4.4 26.900 3 25.500 3 23.700z" fill="#F2FCF3" stroke="#208A3C" stroke-width="2" stroke-linejoin="round"/></svg>
<div class="t" style="left:142.6px;top:1064.5px;font-size:27px;line-height:40px;color:#000;-webkit-text-stroke:0.22px currentColor;letter-spacing:0.318px;">spec</div>
<svg class="a" style="left:65.9px;top:1115.7px" width="24" height="24" viewBox="0 0 24 24"><path d="M8.4 5.2L15.6 12L8.4 18.8" fill="none" stroke="#818594" stroke-width="2" stroke-linecap="round" stroke-linejoin="round"/></svg>
<svg class="a" style="left:104px;top:1112px" width="32" height="32" viewBox="0 0 32 32"><path d="M3 8.2C3 6.4 4.4 5 6.2 5h5.2c.9 0 1.7.4 2.3 1.1L16.1 9h9.7c1.8 0 3.2 1.4 3.2 3.2v11.500c0 1.8-1.4 3.2-3.2 3.2H6.2C4.4 26.900 3 25.500 3 23.700z" fill="#EBECF0" stroke="#6C707E" stroke-width="2" stroke-linejoin="round"/></svg>
<div class="t" style="left:142.6px;top:1108.5px;font-size:27px;line-height:40px;color:#000;-webkit-text-stroke:0.22px currentColor;letter-spacing:0.356px;">storage</div>
<div class="a" style="left:0;top:1150px;width:784px;height:44px;background:#E6F5E9"></div>
<svg class="a" style="left:65.9px;top:1159.7px" width="24" height="24" viewBox="0 0 24 24"><path d="M8.4 5.2L15.6 12L8.4 18.8" fill="none" stroke="#818594" stroke-width="2" stroke-linecap="round" stroke-linejoin="round"/></svg>
<svg class="a" style="left:104px;top:1156px" width="32" height="32" viewBox="0 0 32 32"><path d="M3 8.2C3 6.4 4.4 5 6.2 5h5.2c.9 0 1.7.4 2.3 1.1L16.1 9h9.7c1.8 0 3.2 1.4 3.2 3.2v11.500c0 1.8-1.4 3.2-3.2 3.2H6.2C4.4 26.900 3 25.500 3 23.700z" fill="#F2FCF3" stroke="#208A3C" stroke-width="2" stroke-linejoin="round"/></svg>
<div class="t" style="left:142.6px;top:1152.5px;font-size:27px;line-height:40px;color:#000;-webkit-text-stroke:0.22px currentColor;letter-spacing:0.823px;">test</div>
<div class="a" style="left:0;top:1194px;width:784px;height:44px;background:#FFF5E0"></div>
<svg class="a" style="left:65.9px;top:1203.7px" width="24" height="24" viewBox="0 0 24 24"><path d="M8.4 5.2L15.6 12L8.4 18.8" fill="none" stroke="#818594" stroke-width="2" stroke-linecap="round" stroke-linejoin="round"/></svg>
<svg class="a" style="left:104px;top:1200px" width="32" height="32" viewBox="0 0 32 32"><path d="M3 8.2C3 6.4 4.4 5 6.2 5h5.2c.9 0 1.7.4 2.3 1.1L16.1 9h9.7c1.8 0 3.2 1.4 3.2 3.2v11.500c0 1.8-1.4 3.2-3.2 3.2H6.2C4.4 26.900 3 25.500 3 23.700z" fill="#FDEBDD" stroke="#EC7A26" stroke-width="2" stroke-linejoin="round"/></svg>
<div class="t" style="left:142.6px;top:1196.5px;font-size:27px;line-height:40px;color:#000;-webkit-text-stroke:0.22px currentColor;letter-spacing:0.492px;">tmp</div>
<svg class="a" style="left:65.9px;top:1247.7px" width="24" height="24" viewBox="0 0 24 24"><path d="M8.4 5.2L15.6 12L8.4 18.8" fill="none" stroke="#818594" stroke-width="2" stroke-linecap="round" stroke-linejoin="round"/></svg>
<svg class="a" style="left:104px;top:1244px" width="32" height="32" viewBox="0 0 32 32"><path d="M3 8.2C3 6.4 4.4 5 6.2 5h5.2c.9 0 1.7.4 2.3 1.1L16.1 9h9.7c1.8 0 3.2 1.4 3.2 3.2v11.500c0 1.8-1.4 3.2-3.2 3.2H6.2C4.4 26.900 3 25.500 3 23.700z" fill="#EBECF0" stroke="#6C707E" stroke-width="2" stroke-linejoin="round"/></svg>
<div class="t" style="left:142.6px;top:1240.5px;font-size:27px;line-height:40px;color:#000;-webkit-text-stroke:0.22px currentColor;letter-spacing:0.287px;">vendor</div>
<svg class="a" style="left:104px;top:1288px" width="32" height="32" viewBox="0 0 32 32"><path d="M3.500 6.500h24.500M3.500 13h24.500M3.500 19.500h24.500M3.500 26h15" stroke="#6C707E" stroke-width="2.200"/></svg>
<div class="t" style="left:142.6px;top:1284.5px;font-size:27px;line-height:40px;color:#000;-webkit-text-stroke:0.22px currentColor;">.browserslistrc</div>
</div>
<div class="a" style="left:852px;top:67px;width:1534px;height:1313px;background:#fff"></div>
<svg class="a" style="left:862px;top:82px" width="34" height="34" viewBox="0 0 34 34"><circle cx="14" cy="16" r="13" fill="#E7EFFD" stroke="#3574F0" stroke-width="2.1"/><circle cx="22.200" cy="24" r="10.300" fill="#fff"/><path d="M20.65 17.07L23.75 17.07L23.70 19.23L25.58 20.32L27.43 19.19L28.98 21.88L27.08 22.91L27.08 25.09L28.98 26.12L27.43 28.81L25.58 27.68L23.70 28.77L23.75 30.93L20.65 30.93L20.70 28.77L18.82 27.68L16.97 28.81L15.42 26.12L17.32 25.09L17.32 22.91L15.42 21.88L16.97 19.19L18.82 20.32L20.70 19.23L20.65 17.07Z" fill="#EBECF0" stroke="#6C707E" stroke-width="1.8" stroke-linejoin="round"/><circle cx="22.2" cy="24" r="2.0" fill="#6C707E"/></svg>
<div class="t" style="left:900.5px;top:78.8px;font-size:26px;line-height:40px;color:#000;-webkit-text-stroke:0.22px currentColor;letter-spacing:-0.216px;">users_controller.rb</div>
<svg class="a" style="left:1118px;top:86px" width="24" height="24" viewBox="0 0 24 24"><path d="M5 5l14 14M19 5L5 19" stroke="#A0A3AD" stroke-width="1.800" stroke-linecap="round"/></svg>
<div class="a" style="left:852px;top:128px;width:1534px;height:2px;background:#EBECF0"></div>
<div class="a" style="left:852px;top:124.2px;width:302px;height:5.5px;border-radius:2.7px;background:#A8ADBD"></div>
<div class="a" style="left:2345.8px;top:85.8px;width:4.4px;height:4.4px;border-radius:3px;background:#6C707E"></div>
<div class="a" style="left:2345.8px;top:95.8px;width:4.4px;height:4.4px;border-radius:3px;background:#6C707E"></div>
<div class="a" style="left:2345.8px;top:105.8px;width:4.4px;height:4.4px;border-radius:3px;background:#6C707E"></div>
<div class="a" id="ed" style="left:852px;top:130px;width:1534px;height:1250px;overflow:hidden">
<div class="a" style="left:0;top:2px;width:1534px;height:44px;background:#F5F8FE"></div>
<div class="a" style="left:92px;top:0;width:2px;height:1260px;background:#EBECF0"></div>
<div class="a" style="left:126px;top:46px;width:2px;height:308px;background:#EDEEF1"></div>
<div class="a" style="left:158px;top:134px;width:2px;height:88px;background:#EDEEF1"></div>
<div class="a" style="left:158px;top:266px;width:2px;height:44px;background:#EDEEF1"></div>
<div class="a" style="left:126px;top:486px;width:2px;height:132px;background:#EDEEF1"></div>
<div class="a" style="left:126px;top:750px;width:2px;height:176px;background:#EDEEF1"></div>
<div class="a" style="left:126px;top:1058px;width:2px;height:176px;background:#EDEEF1"></div>
<div class="code" style="left:98.5px;top:3px">  <span class="k">def</span> <span class="m">update</span></div>
<div class="code" style="left:98.5px;top:47px">    <span class="v">@user</span> = <span class="c">User</span>.find(params[<span class="v">:id</span>])</div>
<div class="code" style="left:98.5px;top:91px">    <span class="k">if</span> <span class="v">@user</span>.update(user_params)</div>
<div class="code" style="left:98.5px;top:135px">      flash[<span class="v">:success</span>] = <span class="s">&quot;Profile updated&quot;</span></div>
<div class="code" style="left:98.5px;top:179px">      <span class="f">redirect_to</span> <span class="v">@user</span></div>
<div class="code" style="left:98.5px;top:223px">    <span class="k">else</span></div>
<div class="code" style="left:98.5px;top:267px">      <span class="f">render</span> <span class="s">&#x27;edit&#x27;</span></div>
<div class="code" style="left:98.5px;top:311px">    <span class="k">end</span></div>
<div class="code" style="left:98.5px;top:355px">  <span class="k">end</span></div>
<div class="code" style="left:98.5px;top:443px">  <span class="k">def</span> <span class="m">destroy</span></div>
<div class="code" style="left:98.5px;top:487px">    <span class="c">User</span>.find(params[<span class="v">:id</span>]).destroy</div>
<div class="code" style="left:98.5px;top:531px">    flash[<span class="v">:success</span>] = <span class="s">&quot;User deleted&quot;</span></div>
<div class="code" style="left:98.5px;top:575px">    <span class="f">redirect_to</span> users_url</div>
<div class="code" style="left:98.5px;top:619px">  <span class="k">end</span></div>
<div class="code" style="left:98.5px;top:707px">  <span class="k">def</span> <span class="m">following</span></div>
<div class="code" style="left:98.5px;top:751px">    <span class="v">@title</span> = <span class="s">&quot;Following&quot;</span></div>
<div class="code" style="left:98.5px;top:795px">    <span class="v">@user</span>  = <span class="c">User</span>.find(params[<span class="v">:id</span>])</div>
<div class="code" style="left:98.5px;top:839px">    <span class="v">@users</span> = <span class="v">@user</span>.following.<span class="f">paginate</span>(<span class="v">page</span>: params[<span class="v">:page</span>])</div>
<div class="code" style="left:98.5px;top:883px">    <span class="f">render</span> <span class="s">&#x27;show_follow&#x27;</span></div>
<div class="code" style="left:98.5px;top:927px">  <span class="k">end</span></div>
<div class="code" style="left:98.5px;top:1015px">  <span class="k">def</span> <span class="m">followers</span></div>
<div class="code" style="left:98.5px;top:1059px">    <span class="v">@title</span> = <span class="s">&quot;Followers&quot;</span></div>
<div class="code" style="left:98.5px;top:1103px">    <span class="v">@user</span>  = <span class="c">User</span>.find(params[<span class="v">:id</span>])</div>
<div class="code" style="left:98.5px;top:1147px">    <span class="v">@users</span> = <span class="v">@user</span>.followers.<span class="f">paginate</span>(<span class="v">page</span>: params[<span class="v">:page</span>])</div>
<div class="code" style="left:98.5px;top:1191px">    <span class="f">render</span> <span class="s">&#x27;show_follow&#x27;</span></div>
<div class="code" style="left:98.5px;top:1235px">  <span class="k">end</span></div>
<div class="a" style="left:1486px;top:4px;width:44px;height:46px;border-radius:6px;background:#fff"></div>
<svg class="a" style="left:1494px;top:12px" width="28" height="26" viewBox="0 0 28 26"><path d="M4.500 11.400L11.500 18.300L23.400 6" fill="none" stroke="#57A865" stroke-width="5.200"/></svg>
<div class="a" style="left:1506px;top:318px;width:28px;height:4px;background:#FEC8C8"></div>
<div class="a" style="left:1506px;top:358px;width:28px;height:4px;background:#FEC8C8"></div>
<div class="a" style="left:1514px;top:508px;width:14px;height:370px;border-radius:7px;background:#C9C9C9"></div>
<div class="a" style="left:1182px;top:80px;width:236px;height:64px;border-radius:8px;background:#FCFCFC"></div>
<svg class="a" style="left:1182px;top:80px;opacity:.4" width="236" height="64" viewBox="0 0 236 64"><defs><linearGradient id="rmA" x1="0" y1="0" x2="1" y2="1"><stop offset="0" stop-color="#FF9B2B"/><stop offset=".5" stop-color="#FFB13D"/><stop offset="1" stop-color="#FF4F86"/></linearGradient><linearGradient id="rmB" x1="0" y1="0" x2=".8" y2="1"><stop offset="0" stop-color="#A855F7"/><stop offset=".45" stop-color="#FF4F9A"/><stop offset="1" stop-color="#FF9A2E"/></linearGradient><linearGradient id="ffA" x1=".7" y1="0" x2=".3" y2="1"><stop offset="0" stop-color="#FFE347"/><stop offset=".45" stop-color="#FF9A2E"/><stop offset=".8" stop-color="#FF4A6E"/><stop offset="1" stop-color="#E33BB0"/></linearGradient><linearGradient id="ffB" x1="0" y1="0" x2="0" y2="1"><stop offset="0" stop-color="#FFF36A"/><stop offset="1" stop-color="#FFB52E"/></linearGradient><linearGradient id="ffC" x1="0" y1="0" x2="0" y2="1"><stop offset="0" stop-color="#B86BFF"/><stop offset="1" stop-color="#7542E5"/></linearGradient><linearGradient id="sfA" x1="0" y1="0" x2="0" y2="1"><stop offset="0" stop-color="#35C3F3"/><stop offset="1" stop-color="#2A7FF0"/></linearGradient></defs><path d="M33.700 16.500L40.900 18.300L50 16.200L56 22.600L53.100 39.900L49 41.700V22.600H33.700z" fill="url(#rmA)"/><path d="M24 21L35.800 19L38.800 22.600H30.200V41.700H49V45.500L30.200 47.900L24 39.900z" fill="url(#rmB)"/><rect x="30.200" y="22" width="19.600" height="19.700" fill="#000"/><text x="31.300" y="32.300" font-family="Liberation Sans, sans-serif" font-weight="700" font-size="10.800" fill="#fff">RM</text><rect x="32.200" y="37" width="7.200" height="1.800" fill="#fff"/><circle cx="91.800" cy="32" r="13.900" fill="#DB4437"/><path d="M91.800 32L79.800 25.100A13.900 13.900 0 0 0 90.800 45.900z" fill="#0F9D58"/><path d="M91.800 32L90.800 45.900A13.900 13.900 0 0 0 104.500 26.400z" fill="#FFCD40"/><circle cx="91.800" cy="32" r="6.300" fill="#fff"/><circle cx="91.800" cy="32" r="5.100" fill="#4285F4"/><path d="M148.400 16c2.500 2 4.200 4.200 5 6.500c.9-.5 1.400-1.300 1.600-2.300c2.600 3.600 4 7.900 4 12.800c0 8.700-6.700 15.700-15 15.700s-15-7-15-15.700c0-4.200 1.300-8.300 3.800-11.500c.2 1.300.7 2.400 1.500 3.200c.7-1.600 1.900-2.900 3.400-3.700c-.1 1.400.2 2.600.9 3.500c1.600-.4 3.300-.4 4.900.1c1.400-2.300 3.200-5.300 4.900-8.600z" fill="url(#ffA)"/><path d="M148.400 16c2.500 2 4.200 4.200 5 6.500c.9-.5 1.400-1.300 1.600-2.300c2.600 3.600 4 7.900 4 12.800c0 4-1.400 7.600-3.800 10.400c1-2.800.6-6.300-1-9.500c-1.400-2.800-3.700-4.600-5.400-7.100c-1.400-2.100-1.400-5.500-.4-10.800z" fill="url(#ffB)"/><circle cx="143.800" cy="33.600" r="6.300" fill="url(#ffC)"/><path d="M134.500 29.500c2-.8 4.500-.6 6.500.6c1.500.9 3 1 4.600.4c-1.200 1.700-3.200 2.600-5.500 2.300c-2.300-.3-4.100-1.500-5.600-3.300z" fill="#FFB52E"/><circle cx="195.800" cy="32" r="12.900" fill="url(#sfA)"/><circle cx="195.800" cy="32" r="11.600" fill="none" stroke="#fff" stroke-opacity=".6" stroke-width="1.400" stroke-dasharray="0.500 1.020"/><path d="M204.800 23l-7.500 10.500-3-3z" fill="#FF3B30"/><path d="M186.800 41l7.500-10.500 3 3z" fill="#fff"/></svg>
</div>
<div class="a" style="left:852px;top:1380px;width:1534px;height:2px;background:#EBECF0"></div>
<div class="a" style="left:852px;top:1382px;width:1534px;height:46px;background:#fff"></div>
<div class="t" style="left:872px;top:1385.0px;font-size:27px;line-height:40px;color:#6C707E;-webkit-text-stroke:0.22px currentColor;letter-spacing:0.674px;">UsersController</div>
<svg class="a" style="left:1078.8px;top:1393.3px" width="24" height="24" viewBox="0 0 24 24"><path d="M9.7 5.9L14.3 12L9.7 18.1" fill="none" stroke="#B4B8C4" stroke-width="1.8" stroke-linecap="round" stroke-linejoin="round"/></svg>
<div class="t" style="left:1112px;top:1385.0px;font-size:27px;line-height:40px;color:#6C707E;-webkit-text-stroke:0.22px currentColor;letter-spacing:0.681px;">update</div>
<svg class="a" style="left:2404px;top:83px" width="32" height="34" viewBox="0 0 32 34"><path d="M4.200 26L8 17.500V12A8 8 0 0 1 24 12V17.500L27.800 26Z" fill="none" stroke="#6C707E" stroke-width="2.2" stroke-linejoin="round"/><path d="M12.600 29h6.800c-.4 1.900-1.700 3.100-3.400 3.100s-3-1.200-3.400-3.100z" fill="#6C707E"/></svg>
<svg class="a" style="left:2404px;top:148px" width="32" height="32" viewBox="0 0 32 32"><g fill="none" stroke="#6C707E" stroke-width="2.1"><ellipse cx="16" cy="7.200" rx="11" ry="4.300"/><path d="M5 7.200v17.300c0 2.400 4.900 4.300 11 4.300s11-1.900 11-4.300V7.200M5 13c0 2.400 4.900 4.300 11 4.300s11-1.900 11-4.300M5 18.800c0 2.400 4.900 4.300 11 4.300s11-1.900 11-4.300"/></g></svg>
<div class="a" style="left:28px;top:1446px;width:11.600px;height:11.600px;border:2px solid #3574F0;border-radius:4px;background:#E7EFFD"></div>
<div class="t" style="left:52px;top:1433.5px;font-size:26px;line-height:40px;color:#6C707E;-webkit-text-stroke:0.22px currentColor;letter-spacing:-0.853px;">sample_rails_app</div>
<svg class="a" style="left:256.5px;top:1440px" width="24" height="24" viewBox="0 0 24 24"><path d="M8.0 4.5L16.0 12L8.0 19.5" fill="none" stroke="#818594" stroke-width="1.8" stroke-linecap="round" stroke-linejoin="round"/></svg>
<div class="t" style="left:294px;top:1433.5px;font-size:26px;line-height:40px;color:#6C707E;-webkit-text-stroke:0.22px currentColor;letter-spacing:-0.445px;">app</div>
<svg class="a" style="left:349px;top:1440px" width="24" height="24" viewBox="0 0 24 24"><path d="M8.0 4.5L16.0 12L8.0 19.5" fill="none" stroke="#818594" stroke-width="1.8" stroke-linecap="round" stroke-linejoin="round"/></svg>
<div class="t" style="left:386.5px;top:1433.5px;font-size:26px;line-height:40px;color:#6C707E;-webkit-text-stroke:0.22px currentColor;letter-spacing:-0.366px;">models</div>
<svg class="a" style="left:481px;top:1440px" width="24" height="24" viewBox="0 0 24 24"><path d="M8.0 4.5L16.0 12L8.0 19.5" fill="none" stroke="#818594" stroke-width="1.8" stroke-linecap="round" stroke-linejoin="round"/></svg>
<svg class="a" style="left:520px;top:1437px" width="34" height="34" viewBox="0 0 34 34"><circle cx="14.2" cy="16" r="13" fill="#E7EFFD"/><path d="M27.150 14.800A13 13 0 1 0 14.200 29" fill="none" stroke="#3574F0" stroke-width="2.1"/><path d="M19.300 12.500A6 6 0 1 0 14.200 22" fill="none" stroke="#3574F0" stroke-width="2"/><rect x="14.200" y="26" width="4" height="6" fill="#F7F8FA"/><rect x="15.200" y="17" width="17" height="17" rx="3" fill="#F7F8FA"/><rect x="17.200" y="19.200" width="11.800" height="11.800" rx="2" fill="#FDFDFE" stroke="#6C707E" stroke-width="2"/><path d="M17.200 23.300H29M23.100 19.200V31" stroke="#6C707E" stroke-width="2"/></svg>
<div class="t" style="left:558px;top:1433.5px;font-size:26px;line-height:40px;color:#6C707E;-webkit-text-stroke:0.22px currentColor;letter-spacing:-0.083px;">user.rb</div>
</div></body></html>
